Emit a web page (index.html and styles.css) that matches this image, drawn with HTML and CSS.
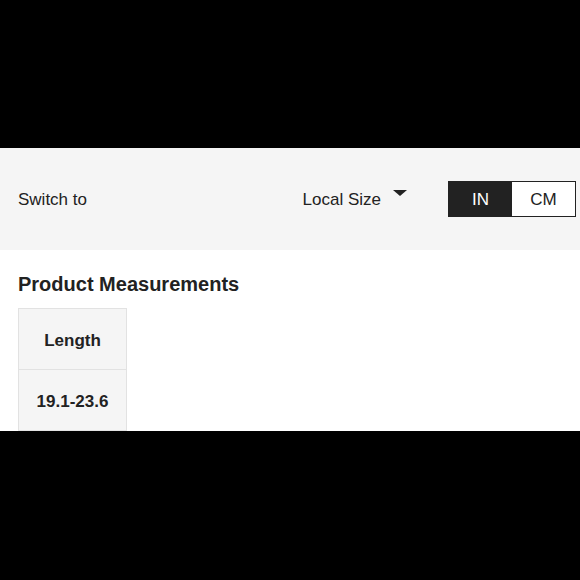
FILE: index.html
```html
<!DOCTYPE html>
<html>
<head>
<meta charset="utf-8">
<link rel="stylesheet" href="styles.css">
</head>
<body>
<main class="frame">
  <section class="switch-bar">
    <span class="switch-label">Switch to</span>
    <div class="local-size">
      <span>Local Size</span>
      <span class="caret"></span>
    </div>
    <div class="unit-toggle">
      <span class="unit active">IN</span>
      <span class="unit">CM</span>
    </div>
  </section>
  <section class="measurements">
    <h2 class="title">Product Measurements</h2>
    <table class="size-table">
      <tr><th>Length</th></tr>
      <tr><td>19.1-23.6</td></tr>
    </table>
  </section>
</main>
</body>
</html>
```

FILE: styles.css
```css
html, body {
  margin: 0;
  padding: 0;
  background: #000;
}
body {
  width: 580px;
  height: 580px;
  overflow: hidden;
  font-family: "Liberation Sans", Arial, sans-serif;
  color: #222;
}
.frame {
  margin-top: 148px;
  height: 283px;
  background: #fff;
  overflow: hidden;
}
.switch-bar {
  height: 102px;
  background: #f5f5f5;
  display: flex;
  align-items: center;
  padding: 0 4px 0 18px;
  font-size: 17px;
}
.switch-label {
  flex: 1;
  padding-top: 1px;
}
.local-size {
  display: flex;
  align-items: center;
  gap: 12px;
  margin-right: 40px;
  padding-top: 1px;
}
.caret {
  width: 0;
  height: 0;
  border-left: 7px solid transparent;
  border-right: 7px solid transparent;
  border-top: 6px solid #222;
  margin-top: -13px;
}
.unit-toggle {
  display: flex;
  border: 1.5px solid #222;
  height: 34px;
  margin-left: 1px;
}
.unit {
  display: flex;
  align-items: center;
  justify-content: center;
  width: 63px;
  padding-top: 1px;
  box-sizing: border-box;
  background: #fff;
}
.unit.active {
  background: #222;
  color: #fff;
}
.measurements {
  padding: 22px 0 0 18px;
}
.title {
  margin: 0 0 12px;
  font-size: 20px;
  line-height: 24px;
  font-weight: bold;
}
.size-table {
  border-collapse: collapse;
  font-size: 17px;
  font-weight: bold;
}
.size-table th, .size-table td {
  width: 108px;
  height: 61px;
  padding: 4px 0 0;
  box-sizing: border-box;
  text-align: center;
  background: #f5f5f5;
  border: 1px solid #e2e2e2;
  font-weight: bold;
}
```
